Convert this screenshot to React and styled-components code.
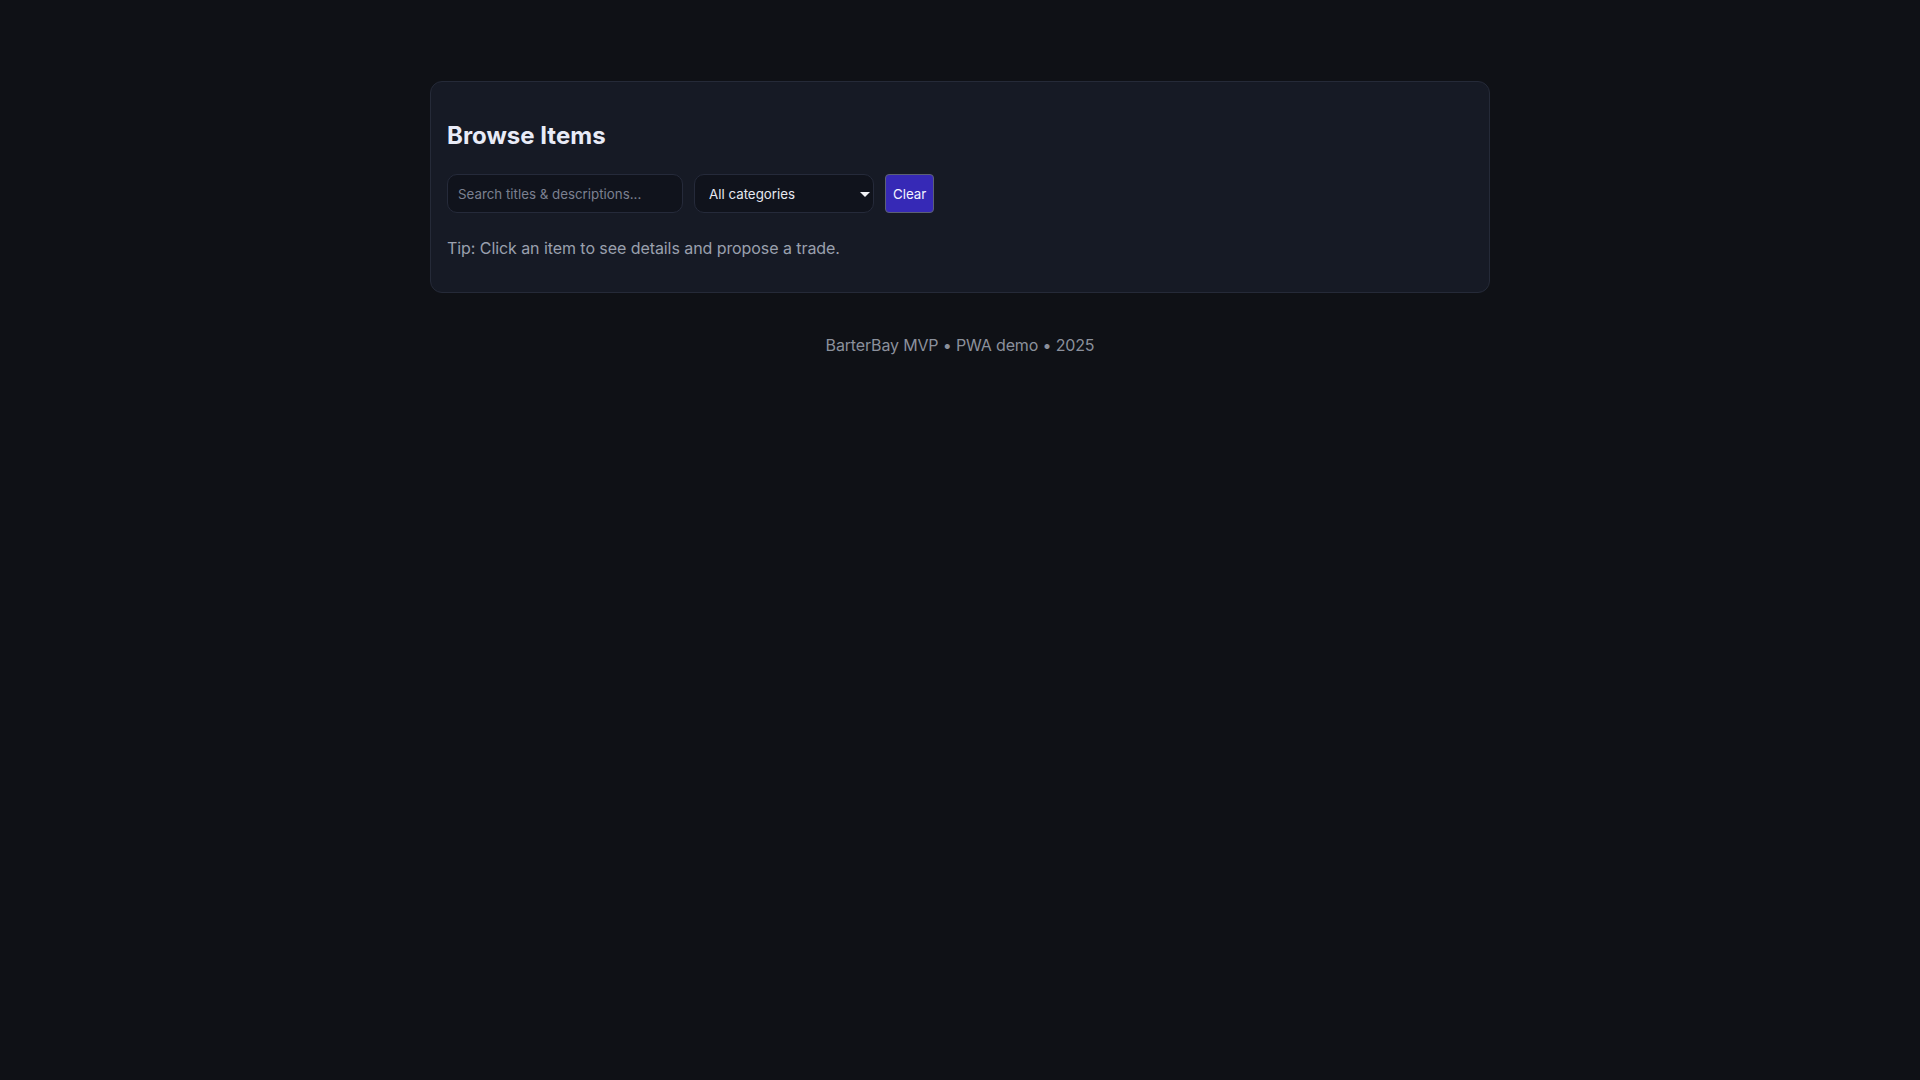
import React, { useState } from "react";
import styled, { createGlobalStyle } from "styled-components";

const GlobalStyle = createGlobalStyle`
  html, body {
    margin: 0;
    padding: 0;
    background: #0f1116;
    color: #e6e8f0;
    font-family: Inter, "Noto Sans", "Liberation Sans", sans-serif;
  }
  * { box-sizing: border-box; }
`;

const Page = styled.div`
  min-height: 1080px;
  padding-top: 81px;
`;

const Container = styled.main`
  width: 1060px;
  margin: 0 auto;
`;

const Card = styled.section`
  background: #161a25;
  border: 1px solid #252a38;
  border-radius: 12px;
  padding: 16px;
`;

const Title = styled.h2`
  margin: 23px 0 24px;
  font-size: 24px;
  font-weight: 700;
  line-height: 29px;
  color: #e8ebf7;
`;

const Controls = styled.div`
  display: flex;
  align-items: center;
  gap: 11px;
`;

const SearchInput = styled.input`
  width: 236px;
  height: 39px;
  padding: 0 10px;
  background: #10131c;
  border: 1px solid #252a3a;
  border-radius: 10px;
  color: #e6e8f0;
  font-family: Inter, "Noto Sans", sans-serif;
  font-size: 13.333px;
  outline: none;
  &::placeholder {
    color: #7b8090;
  }
`;

const SelectWrap = styled.div`
  position: relative;
  width: 180px;
  height: 39px;
  &::after {
    content: "";
    position: absolute;
    right: 4px;
    top: 18px;
    width: 0;
    height: 0;
    border-left: 5px solid transparent;
    border-right: 5px solid transparent;
    border-top: 5px solid #f2f3f7;
    pointer-events: none;
  }
`;

const Select = styled.select`
  appearance: none;
  -webkit-appearance: none;
  width: 100%;
  height: 100%;
  padding: 0 20px 0 14px;
  background: #10131c;
  border: 1px solid #252a3a;
  border-radius: 10px;
  color: #e6e8f0;
  font-family: Inter, "Noto Sans", sans-serif;
  font-size: 13.333px;
  outline: none;
  cursor: pointer;
`;

const ClearButton = styled.button`
  height: 39px;
  padding: 0 7px;
  background: #3629b6;
  border: 1px solid #5c6074;
  border-radius: 4px;
  color: #f3f4ff;
  font-family: Inter, "Noto Sans", sans-serif;
  font-size: 13.333px;
  cursor: pointer;
`;

const Tip = styled.p`
  margin: 25px 0 18px;
  padding-top: 1px;
  font-size: 16px;
  line-height: 19.4px;
  letter-spacing: -0.07px;
  color: #9aa0ae;
`;

const Footer = styled.footer`
  margin-top: 43px;
  text-align: center;
  font-size: 16px;
  line-height: 19.4px;
  letter-spacing: -0.15px;
  color: #8b909c;
`;

export default function App() {
  const [q, setQ] = useState("");
  const [cat, setCat] = useState("");
  return (
    <Page>
      <GlobalStyle />
      <Container>
        <Card>
          <Title>Browse Items</Title>
          <Controls>
            <SearchInput
              placeholder="Search titles & descriptions..."
              value={q}
              onChange={(e) => setQ(e.target.value)}
            />
            <SelectWrap>
              <Select value={cat} onChange={(e) => setCat(e.target.value)}>
                <option value="">All categories</option>
                <option value="electronics">Electronics</option>
                <option value="books">Books</option>
                <option value="clothing">Clothing</option>
                <option value="home">Home</option>
              </Select>
            </SelectWrap>
            <ClearButton
              onClick={() => {
                setQ("");
                setCat("");
              }}
            >
              Clear
            </ClearButton>
          </Controls>
          <Tip>Tip: Click an item to see details and propose a trade.</Tip>
        </Card>
        <Footer>BarterBay MVP • PWA demo • 2025</Footer>
      </Container>
    </Page>
  );
}
